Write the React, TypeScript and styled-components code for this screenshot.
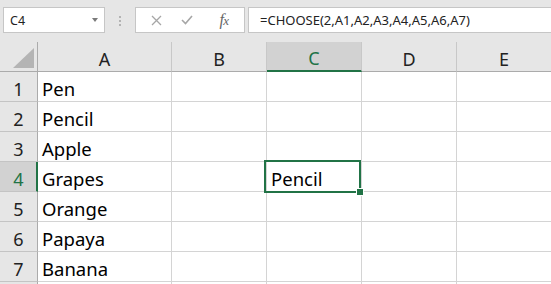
import React from 'react';
import styled, { createGlobalStyle } from 'styled-components';

const green = '#217346';

const GlobalStyle = createGlobalStyle`
  html, body {
    margin: 0;
    padding: 0;
    background: #ffffff;
    overflow: hidden;
  }
  body {
    font-family: 'Noto Sans', 'Open Sans', sans-serif;
  }
`;

const Page = styled.div`
  width: 551px;
  height: 284px;
  overflow: hidden;
  background: #e6e6e6;
`;

const Toolbar = styled.div`
  height: 42px;
  box-sizing: border-box;
  padding: 7px 0 0 3px;
  display: flex;
  align-items: flex-start;
  background: #e6e6e6;
`;

const Box = styled.div`
  height: 26px;
  box-sizing: border-box;
  border: 1px solid #c6c6c6;
  background: #ffffff;
  display: flex;
  align-items: center;
`;

const NameBox = styled(Box)`
  width: 102px;
  padding: 0 6px 0 6px;
  justify-content: space-between;
  font-size: 12.5px;
  color: #222;
`;

const Caret = styled.span`
  width: 0;
  height: 0;
  border-left: 3.5px solid transparent;
  border-right: 3.5px solid transparent;
  border-top: 4px solid #7a7a7a;
`;

const Grip = styled.div`
  width: 2px;
  margin: 9px 14px 0 14px;
  display: flex;
  flex-direction: column;
  gap: 2px;
`;

const GripDot = styled.span`
  width: 2px;
  height: 2px;
  background: #b3b3b3;
`;

const ButtonBox = styled(Box)`
  width: 110px;
  padding-left: 13px;
`;

const IconSlot = styled.span<{ $w: number }>`
  width: ${(p) => p.$w}px;
  display: flex;
  align-items: center;
  justify-content: center;
`;

const Fx = styled.span`
  font-family: 'Liberation Serif', serif;
  font-style: italic;
  font-size: 16px;
  color: #666666;
  letter-spacing: -0.5px;
  & small {
    font-size: 13px;
  }
`;

const FormulaBox = styled(Box)`
  flex: 1;
  margin-left: 3px;
  padding-left: 11px;
  border-right: none;
  font-size: 13px;
  color: #222;
  white-space: nowrap;
`;

const Sheet = styled.div`
  position: relative;
  display: grid;
  grid-template-columns: 38px 134px 95px 95px 95px 95px;
  grid-auto-rows: 30px;
  background: #ffffff;
`;

const Corner = styled.div`
  position: relative;
  background: #e6e6e6;
  border-right: 1px solid #ababab;
  border-bottom: 1px solid #ababab;
`;

const CornerTriangle = styled.span`
  position: absolute;
  right: 3px;
  bottom: 3px;
  width: 0;
  height: 0;
  border-left: 21px solid transparent;
  border-bottom: 20px solid #b4b4b4;
`;

const ColHead = styled.div<{ $active?: boolean }>`
  box-sizing: border-box;
  background: ${(p) => (p.$active ? '#d2d2d2' : '#e6e6e6')};
  border-right: 1px solid #c8c8c8;
  border-bottom: ${(p) => (p.$active ? `2px solid ${green}` : '1px solid #ababab')};
  color: ${(p) => (p.$active ? green : '#222')};
  font-size: 18px;
  display: flex;
  align-items: flex-end;
  justify-content: center;
`;

const RowHead = styled.div<{ $active?: boolean }>`
  box-sizing: border-box;
  background: ${(p) => (p.$active ? '#d2d2d2' : '#e6e6e6')};
  border-right: ${(p) => (p.$active ? `2px solid ${green}` : '1px solid #ababab')};
  border-bottom: 1px solid #c4c4c4;
  color: ${(p) => (p.$active ? green : '#222')};
  font-size: 18px;
  display: flex;
  align-items: flex-end;
  justify-content: center;
  padding-left: ${(p) => (p.$active ? 1 : 0)}px;
`;

const Cell = styled.div`
  box-sizing: border-box;
  border-right: 1px solid #d4d4d4;
  border-bottom: 1px solid #d4d4d4;
  font-size: 18.5px;
  color: #000;
  padding-left: 4px;
  display: flex;
  align-items: flex-end;
  white-space: nowrap;
  overflow: hidden;
`;

const Selection = styled.div`
  position: absolute;
  left: 264px;
  top: 118px;
  width: 97px;
  height: 33px;
  box-sizing: border-box;
  border: 2px solid ${green};
  pointer-events: none;
`;

const FillHandle = styled.span`
  position: absolute;
  right: -5px;
  bottom: -5px;
  width: 6px;
  height: 6px;
  background: ${green};
  border: 1px solid #ffffff;
`;

const columns = ['A', 'B', 'C', 'D', 'E'];
const items = ['Pen', 'Pencil', 'Apple', 'Grapes', 'Orange', 'Papaya', 'Banana', ''];

const activeCol = 'C';
const activeRow = 4;

export default function App() {
  return (
    <Page>
      <GlobalStyle />
      <Toolbar>
        <NameBox>
          <span>C4</span>
          <Caret />
        </NameBox>
        <Grip>
          <GripDot />
          <GripDot />
          <GripDot />
        </Grip>
        <ButtonBox>
          <IconSlot $w={14}>
            <svg width="11" height="11" viewBox="0 0 11 11">
              <path d="M1 1 L10 10 M10 1 L1 10" stroke="#a6a6a6" strokeWidth="1.3" fill="none" />
            </svg>
          </IconSlot>
          <IconSlot $w={48}>
            <svg width="12" height="10" viewBox="0 0 12 10">
              <path d="M1 5 L4.5 8.5 L11 1" stroke="#a6a6a6" strokeWidth="1.6" fill="none" />
            </svg>
          </IconSlot>
          <IconSlot $w={26}>
            <Fx>
              f<small>x</small>
            </Fx>
          </IconSlot>
        </ButtonBox>
        <FormulaBox>=CHOOSE(2,A1,A2,A3,A4,A5,A6,A7)</FormulaBox>
      </Toolbar>
      <Sheet>
        <Corner>
          <CornerTriangle />
        </Corner>
        {columns.map((c) => (
          <ColHead key={c} $active={c === activeCol}>
            {c}
          </ColHead>
        ))}
        {items.map((item, i) => {
          const row = i + 1;
          return (
            <React.Fragment key={row}>
              <RowHead $active={row === activeRow}>{row < 8 ? row : ''}</RowHead>
              <Cell>{item}</Cell>
              <Cell />
              <Cell>{row === activeRow ? 'Pencil' : ''}</Cell>
              <Cell />
              <Cell />
            </React.Fragment>
          );
        })}
        <Selection>
          <FillHandle />
        </Selection>
      </Sheet>
    </Page>
  );
}
